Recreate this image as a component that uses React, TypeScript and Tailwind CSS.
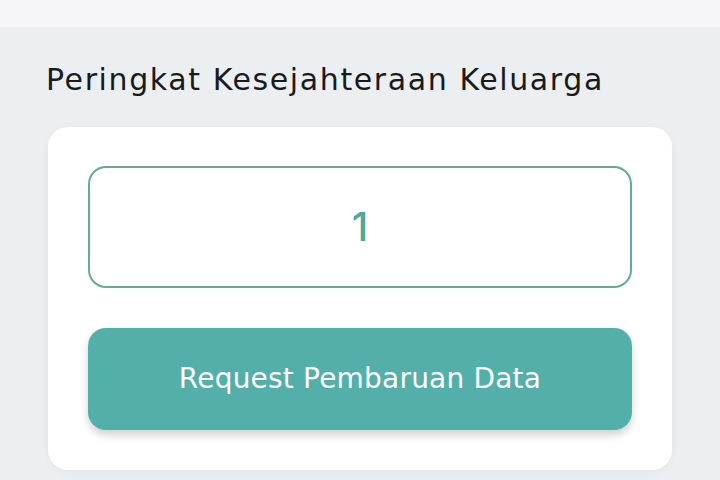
export default function App() {
  return (
    <div className="w-[720px] h-[480px] overflow-hidden bg-[#eceff2] flex flex-col" style={{ fontFamily: "'DejaVu Sans', 'Open Sans', sans-serif" }}>
      <div className="h-[27px] bg-[#f6f6f9] shrink-0" />
      <div className="pl-[46px] pt-[35px] text-[30px] leading-[36px] text-[#181a1c] tracking-[1.6px]">
        Peringkat Kesejahteraan Keluarga
      </div>
      <div className="ml-[48px] mt-[29px] w-[624px] h-[343px] bg-white rounded-[20px] shadow-[0_2px_10px_rgba(0,0,0,0.04)] px-[40px] pt-[39px] flex flex-col gap-[40px]">
        <div className="h-[122px] rounded-[18px] border-2 border-[#63ab98] flex items-center justify-center text-[40px] text-[#4fa99a]" style={{ fontFamily: "Inter, sans-serif", fontWeight: 500 }}>
          1
        </div>
        <div className="h-[102px] rounded-[18px] bg-[#53afa9] shadow-[0_5px_8px_rgba(0,0,0,0.18)] flex items-center justify-center text-white text-[28px] tracking-[0.2px]">
          Request Pembaruan Data
        </div>
      </div>
    </div>
  );
}
